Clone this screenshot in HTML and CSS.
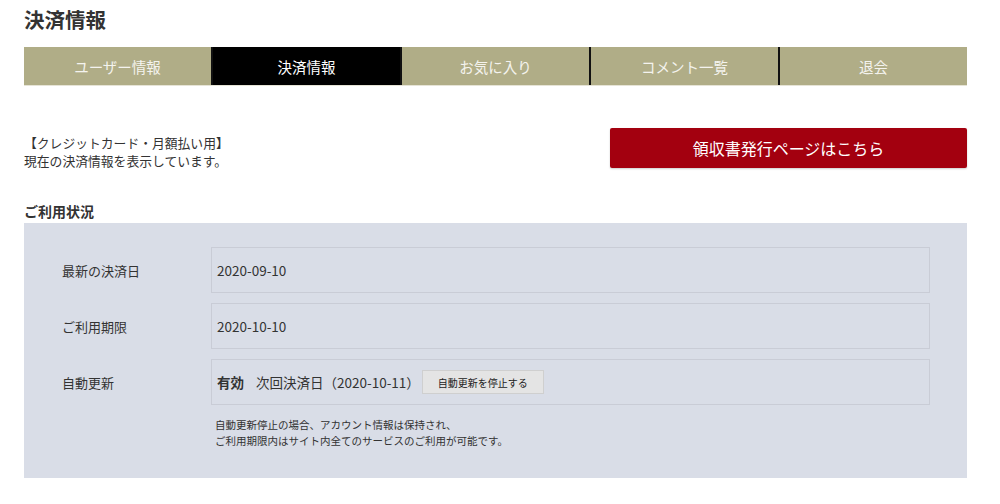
FILE: index.html
```html
<!DOCTYPE html>
<html lang="ja">
<head>
<meta charset="utf-8">
<title>決済情報</title>
<link rel="stylesheet" href="styles.css">
</head>
<body>
<div class="page">
  <h1 class="title">決済情報</h1>
  <nav class="tabs">
    <a class="tab">ユーザー情報</a>
    <a class="tab active">決済情報</a>
    <a class="tab">お気に入り</a>
    <a class="tab">コメント一覧</a>
    <a class="tab">退会</a>
  </nav>
  <div class="intro">
    <p class="intro-text">【クレジットカード・月額払い用】<br>現在の決済情報を表示しています。</p>
    <a class="receipt-btn">領収書発行ページはこちら</a>
  </div>
  <h2 class="section-title">ご利用状況</h2>
  <div class="panel">
    <div class="row">
      <div class="label">最新の決済日</div>
      <div class="value">2020-09-10</div>
    </div>
    <div class="row">
      <div class="label">ご利用期限</div>
      <div class="value">2020-10-10</div>
    </div>
    <div class="row">
      <div class="label">自動更新</div>
      <div class="value"><strong class="status">有効</strong><span class="next">次回決済日（2020-10-11）</span><button class="stop-btn">自動更新を停止する</button></div>
    </div>
    <p class="note">自動更新停止の場合、アカウント情報は保持され、<br>ご利用期限内はサイト内全てのサービスのご利用が可能です。</p>
  </div>
</div>
</body>
</html>
```
FILE: styles.css
```css
* { box-sizing: border-box; }
body {
  margin: 0;
  background: #fff;
  color: #333;
  font-family: "Noto Sans CJK JP", "Noto Sans", sans-serif;
}
.page {
  width: 943px;
  margin-left: 24px;
}
.title {
  margin: 0;
  padding-top: 5px;
  height: 47px;
  font-size: 20.5px;
  line-height: 28px;
  font-weight: bold;
  color: #333;
}
.tabs {
  display: flex;
  height: 39px;
  border-bottom: 1px solid #e6e4d6;
}
.tab {
  flex: 1;
  display: flex;
  align-items: center;
  justify-content: center;
  background: #b0ad87;
  color: #f4f3ee;
  font-size: 14.5px;
  border-left: 2px solid #111;
}
.tab:first-child { border-left: none; }
.tab.active { background: #000; color: #fff; }
.intro {
  display: flex;
  justify-content: space-between;
  align-items: flex-start;
  margin-top: 42px;
}
.intro-text {
  margin: 6px 0 0;
  font-size: 12.8px;
  line-height: 18px;
  color: #333;
}
.receipt-btn {
  width: 357px;
  height: 40px;
  background: #a3000f;
  color: #fff;
  border-radius: 2px;
  display: flex;
  align-items: center;
  justify-content: center;
  font-size: 16px;
  box-shadow: 0 1px 2px rgba(0,0,0,0.2);
}
.section-title {
  margin: 31px 0 0;
  font-size: 14px;
  line-height: 20px;
  font-weight: bold;
  height: 22px;
}
.panel {
  background: #d9dde7;
  padding: 24px 37px 29px 38px;
  display: flex;
  flex-direction: column;
  gap: 10px;
}
.row {
  display: flex;
  align-items: stretch;
}
.label {
  width: 149px;
  display: flex;
  align-items: center;
  font-size: 13px;
  color: #333;
}
.value {
  flex: 1;
  height: 46px;
  border: 1px solid #c9ccd6;
  display: flex;
  align-items: center;
  padding-left: 5px;
  font-size: 13.5px;
  color: #333;
}
.status { font-weight: bold; margin-right: 12px; }
.next { margin-right: 2px; }
.stop-btn {
  width: 122px;
  height: 24px;
  background: #e4e4e4;
  border: 1px solid #cfcfcf;
  font-family: inherit;
  font-size: 10px;
  color: #222;
  padding: 0;
}
.note {
  margin: 2px 0 0 153px;
  font-size: 10.5px;
  line-height: 16px;
  color: #333;
}
```
